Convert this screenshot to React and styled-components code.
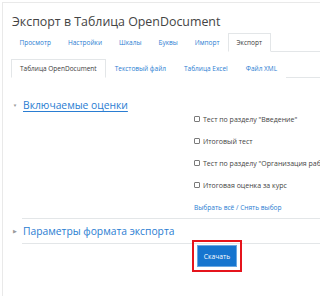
import React from 'react';
import styled, { createGlobalStyle } from 'styled-components';

const GlobalStyle = createGlobalStyle`
  html, body {
    margin: 0;
    padding: 0;
    background: #fff;
  }
  body {
    font-family: "Open Sans", "Liberation Sans", sans-serif;
    color: #333;
  }
`;

const LINK = '#2a7dd2';
const RULE = '#e3e6e8';

const Frame = styled.div`
  margin: 2px 0 0 2px;
  height: 294px;
  box-sizing: border-box;
  border-top: 1px solid #e9e9e9;
  border-left: 1px solid #e9e9e9;
  padding: 10px 0 0 8px;
  overflow: hidden;
`;

const Title = styled.h2`
  margin: 0 0 0 1px;
  font-size: 12.4px;
  font-weight: 400;
  line-height: 17px;
  color: #444;
  white-space: nowrap;
`;

const TabBar = styled.div`
  display: flex;
  align-items: flex-end;
  height: 18px;
  margin-top: ${({ top }) => top}px;
  border-bottom: 1px solid ${RULE};
`;

const Tab = styled.div`
  height: 19px;
  box-sizing: border-box;
  display: flex;
  align-items: center;
  padding: 0 ${({ pad }) => pad}px;
  margin-bottom: -1px;
  font-size: 6.5px;
  white-space: nowrap;
  color: ${({ active }) => (active ? '#3a3a3a' : LINK)};
  background: #fff;
  border: 1px solid ${({ active }) => (active ? RULE : 'transparent')};
  border-bottom-color: ${({ active }) => (active ? '#fff' : 'transparent')};
`;

const Legend = styled.div`
  display: flex;
  align-items: center;
  gap: 4px;
  height: ${({ h }) => h}px;
  margin-left: ${({ indent }) => indent}px;
`;

const Caret = styled.span`
  width: 8px;
  display: flex;
  justify-content: center;
  color: #9a9a9a;
  font-size: 4.5px;
`;

const Heading = styled.span`
  font-size: 10.3px;
  line-height: 12px;
  color: ${LINK};
  text-decoration: ${({ underline }) => (underline ? 'underline' : 'none')};
  text-underline-offset: 1.5px;
  white-space: nowrap;
`;

const Options = styled.div`
  display: flex;
  flex-direction: column;
  padding-left: 183px;
  margin-top: -2px;
`;

const Option = styled.label`
  display: flex;
  align-items: center;
  gap: 3px;
  height: 22px;
  font-size: 7px;
  color: #444;
  white-space: nowrap;
`;

const Box = styled.span`
  width: 4px;
  height: 4px;
  border: 1px solid #7a7a7a;
  border-radius: 1px;
  flex: none;
`;

const SelectLink = styled.div`
  padding-left: 183px;
  height: 22px;
  display: flex;
  align-items: center;
  font-size: 6.6px;
  color: ${LINK};
  white-space: nowrap;
`;

const Fieldset = styled.div`
  margin-left: 11px;
  border-top: 1px solid ${RULE};
  border-bottom: 1px solid ${RULE};
`;

const Actions = styled.div`
  padding: 1px 0 0 186px;
`;

const Button = styled.button`
  display: block;
  width: 40px;
  height: 22px;
  padding: 0;
  font-family: inherit;
  font-size: 6.7px;
  color: #fff;
  background: #1675cf;
  border: 1px solid #6aa8e3;
  outline: 2px solid #e5141c;
  outline-offset: 3px;
`;

const topTabs = ['Просмотр', 'Настройки', 'Шкалы', 'Буквы', 'Импорт', 'Экспорт'];
const subTabs = ['Таблица OpenDocument', 'Текстовый файл', 'Таблица Excel', 'Файл XML'];
const items = [
  'Тест по разделу "Введение"',
  'Итоговый тест',
  'Тест по разделу "Организация работы"',
  'Итоговая оценка за курс',
];

export default function App() {
  return (
    <>
      <GlobalStyle />
      <Frame>
        <Title>Экспорт в Таблица OpenDocument</Title>
        <TabBar top={3}>
          {topTabs.map((t) => (
            <Tab key={t} pad={7.5} active={t === 'Экспорт'}>
              {t}
            </Tab>
          ))}
        </TabBar>
        <TabBar top={7}>
          {subTabs.map((t, i) => (
            <Tab key={t} pad={8} active={i === 0}>
              {t}
            </Tab>
          ))}
        </TabBar>
        <Legend h={10} indent={0} style={{ marginTop: 22 }}>
          <Caret>▼</Caret>
          <Heading underline>Включаемые оценки</Heading>
        </Legend>
        <Options>
          {items.map((t) => (
            <Option key={t}>
              <Box />
              {t}
            </Option>
          ))}
        </Options>
        <SelectLink>Выбрать всё / Снять выбор</SelectLink>
        <Fieldset>
          <Legend h={24} indent={-11}>
            <Caret>▶</Caret>
            <Heading>Параметры формата экспорта</Heading>
          </Legend>
        </Fieldset>
        <Actions>
          <Button>Скачать</Button>
        </Actions>
      </Frame>
    </>
  );
}
